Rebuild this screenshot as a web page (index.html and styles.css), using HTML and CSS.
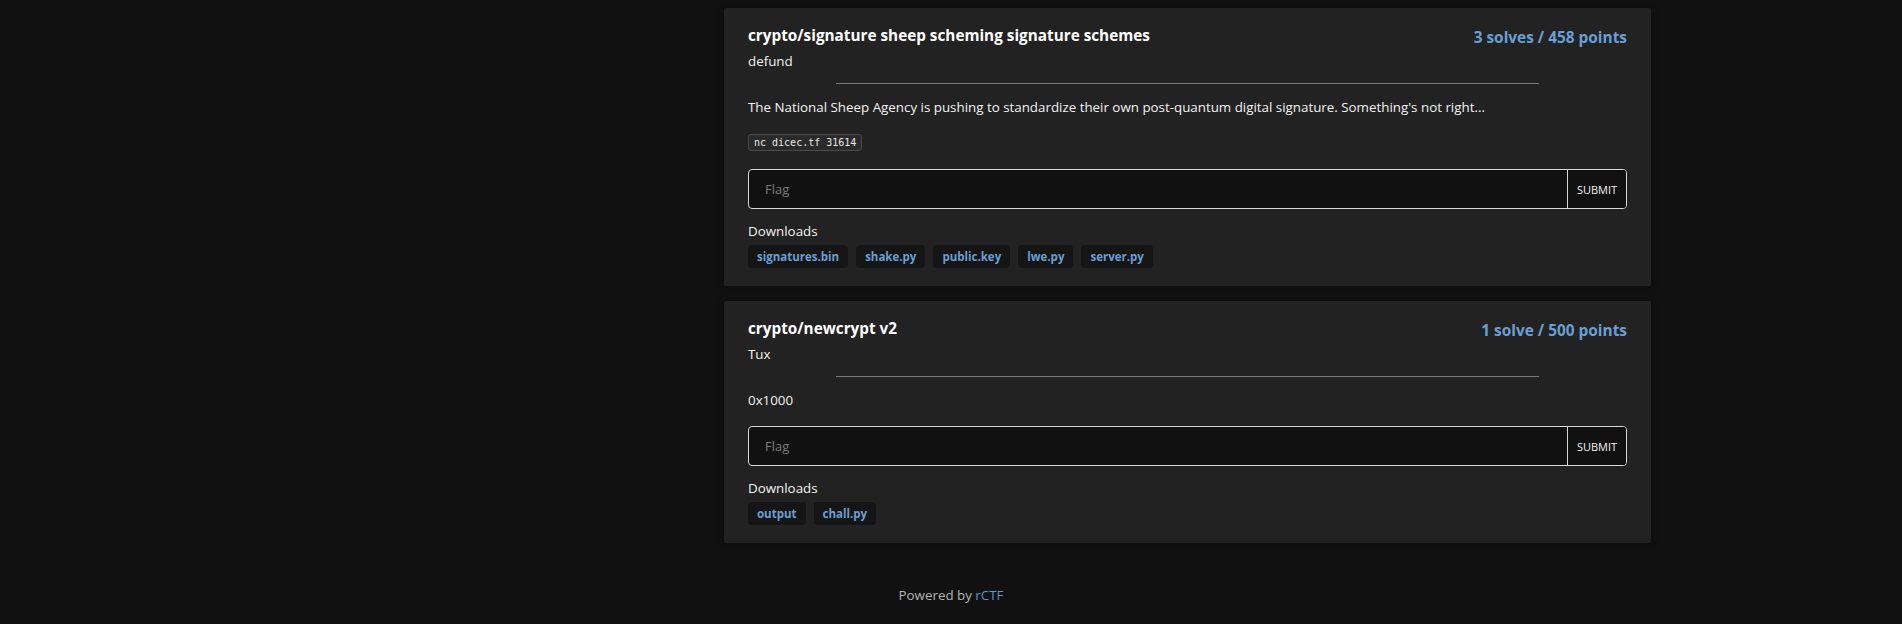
FILE: index.html
```html
<!DOCTYPE html>
<html lang="en">
<head>
<meta charset="utf-8">
<title>Challenges</title>
<link rel="stylesheet" href="styles.css">
</head>
<body>
<div class="layout">
  <aside class="sidebar"></aside>
  <main class="challenges">
    <section class="card">
      <div class="card-head">
        <div class="title">crypto/signature sheep scheming signature schemes</div>
        <div class="points">3 solves / 458 points</div>
      </div>
      <div class="author">defund</div>
      <hr class="divider">
      <p class="desc">The National Sheep Agency is pushing to standardize their own post-quantum digital signature. Something's not right...</p>
      <p class="code-line"><code class="code">nc dicec.tf 31614</code></p>
      <form class="flag-form">
        <input class="flag-input" type="text" placeholder="Flag">
        <button class="submit" type="button">SUBMIT</button>
      </form>
      <div class="downloads-label">Downloads</div>
      <div class="tags">
        <a class="tag">signatures.bin</a>
        <a class="tag">shake.py</a>
        <a class="tag">public.key</a>
        <a class="tag">lwe.py</a>
        <a class="tag">server.py</a>
      </div>
    </section>
    <section class="card">
      <div class="card-head">
        <div class="title">crypto/newcrypt v2</div>
        <div class="points">1 solve / 500 points</div>
      </div>
      <div class="author">Tux</div>
      <hr class="divider">
      <p class="desc">0x1000</p>
      <form class="flag-form">
        <input class="flag-input" type="text" placeholder="Flag">
        <button class="submit" type="button">SUBMIT</button>
      </form>
      <div class="downloads-label">Downloads</div>
      <div class="tags">
        <a class="tag">output</a>
        <a class="tag">chall.py</a>
      </div>
    </section>
  </main>
</div>
<footer class="footer">Powered by <a class="footer-link">rCTF</a></footer>
</body>
</html>
```
FILE: styles.css
```css
* { box-sizing: border-box; }
html, body { margin: 0; padding: 0; }
body {
  background: #111111;
  color: #f2f2f2;
  font-family: "Open Sans", "Noto Sans", sans-serif;
  font-size: 13.35px;
  line-height: 20px;
}
.layout {
  width: 1400px;
  margin: 0 auto;
  display: flex;
  gap: 16px;
}
.sidebar { width: 457px; flex: none; }
.challenges {
  width: 927px;
  flex: none;
  padding-top: 8px;
  display: flex;
  flex-direction: column;
  gap: 15px;
}
.card {
  background: #222222;
  border-radius: 2px;
  padding: 15px 24px 18px;
  box-shadow: 0 0 6px rgba(0,0,0,0.35);
}
.card-head {
  display: flex;
  justify-content: space-between;
  align-items: baseline;
}
.title {
  font-weight: 700;
  font-size: 15.3px;
  line-height: 24px;
  color: #ffffff;
}
.points {
  font-weight: 700;
  font-size: 15.4px;
  line-height: 24px;
  color: #6a9fd4;
  position: relative;
  top: 2px;
}
.author { margin-top: 3px; }
.divider {
  width: 80%;
  margin: 12px auto 0;
  border: 0;
  border-top: 1px solid #7a7a7a;
  height: 0;
}
.desc { margin: 13px 0 16px; }
.code-line { margin: 17px 0 18px; line-height: 15px; }
.code {
  display: inline-block;
  font-family: "DejaVu Sans Mono", monospace;
  font-size: 10px;
  line-height: 15px;
  padding: 0 5px;
  background: #2a2a2a;
  border: 1px solid #4a4a4a;
  border-radius: 3px;
  color: #e8e8e8;
}
.flag-form {
  display: flex;
  height: 40px;
  border: 1px solid #d8d8d8;
  border-radius: 4px;
  background: #111111;
  overflow: hidden;
}
.flag-input {
  flex: 1;
  min-width: 0;
  background: transparent;
  border: 0;
  outline: none;
  padding: 0 16px;
  color: #eee;
  font-family: inherit;
  font-size: 13px;
}
.flag-input::placeholder { color: #7c7c7c; }
.submit {
  width: 59px;
  flex: none;
  background: #111111;
  border: 0;
  border-left: 1px solid #d8d8d8;
  color: #f2f2f2;
  font-family: inherit;
  font-size: 11px;
  padding: 0;
}
.downloads-label { margin-top: 12px; }
.tags {
  display: flex;
  gap: 8px;
  margin-top: 4px;
}
.tag {
  display: block;
  height: 23px;
  line-height: 23px;
  padding: 0 9px;
  background: #151515;
  border-radius: 4px;
  color: #6a9fd4;
  font-weight: 700;
  font-size: 11.5px;
}
.footer {
  text-align: center;
  margin-top: 42px;
  color: #b4b4b4;
}
.footer-link { color: #5e93c4; }
```
